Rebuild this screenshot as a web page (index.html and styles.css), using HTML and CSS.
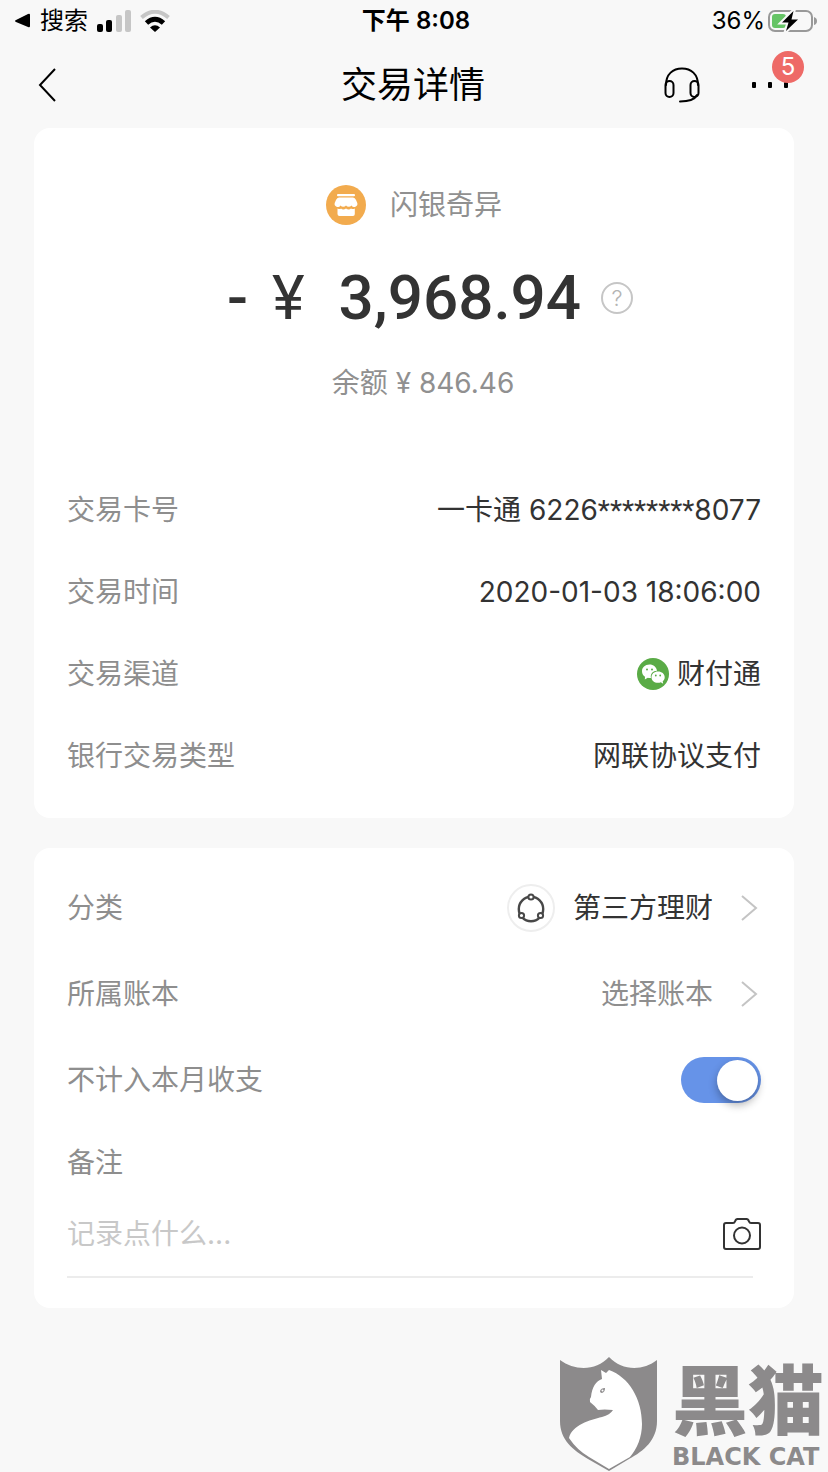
FILE: index.html
```
<!DOCTYPE html>
<html lang="zh-CN">
<head>
    <meta charset="UTF-8">
    <meta name="viewport" content="width=device-width, initial-scale=1.0">
    <title>交易详情</title>
    <link rel="stylesheet" href="styles.css">
</head>
<body>
    <div class="status-bar">
        <div class="status-left">
            <svg width="16" height="16" viewBox="0 0 16 16"><path d="M1 7 L13 1 Q15 0 15 2 V13 Q15 15 13 14 L1 9 Q-1 8 1 7Z"/></svg>
            <span>搜索</span>
            <svg class="signal" width="34" height="22" viewBox="0 0 34 22">
                <rect x="0" y="14" width="6" height="8" rx="2"/>
                <rect x="9" y="10" width="6" height="12" rx="2"/>
                <rect x="19" y="5" width="6" height="17" rx="2" fill="#c6c6c6"/>
                <rect x="28" y="0" width="6" height="22" rx="2" fill="#c6c6c6"/>
            </svg>
            <svg width="30" height="22" viewBox="0 0 30 22" fill="none">
                <path d="M1.500 7.500 Q15 -4 28.500 7.500" stroke="#c6c6c6" stroke-width="4"/>
                <path d="M6.500 13 Q15 5.500 23.500 13" stroke="#000" stroke-width="5"/>
                <path d="M10 17.500 Q15 13 20 17.500 L15 22Z" fill="#000"/>
            </svg>
        </div>
        <div class="status-time">下午 8:08</div>
        <div class="status-right">
            <span>36%</span>
            <svg width="49" height="24" viewBox="0 0 49 24">
                <rect x="1" y="2" width="43" height="20" rx="6" fill="none" stroke="#999" stroke-width="2"/>
                <path d="M46 8 Q49 9 49 12 Q49 15 46 16Z" fill="#999"/>
                <rect x="4" y="5" width="14" height="14" rx="3" fill="#66c466"/>
                <path d="M25.500 2 L14 13.500 H20.500 L18 22 L30 10.500 H23.500Z" stroke="#f8f8f8" stroke-width="4"/>
                <path d="M25.500 2 L14 13.500 H20.500 L18 22 L30 10.500 H23.500Z"/>
            </svg>
        </div>
    </div>

    <header class="nav">
        <button class="icon-btn back" aria-label="返回">
            <svg width="18" height="34" viewBox="0 0 18 34" fill="none" stroke="#000" stroke-width="2"><path d="M17 1 L2 17 L17 33"/></svg>
        </button>
        <h1>交易详情</h1>
        <div class="nav-actions">
            <button class="icon-btn" aria-label="客服">
                <svg width="36" height="36" viewBox="0 0 36 36" fill="none" stroke="#000" stroke-width="2" stroke-linecap="round">
                    <path d="M2 18 C2 7 9 1.500 18 1.500 S34 7 34 18"/>
                    <rect x="1.500" y="14" width="8" height="16" rx="4"/>
                    <rect x="26.500" y="14" width="8" height="16" rx="4"/>
                    <path d="M33 28 C31 32 25 34.500 16 34.500"/>
                </svg>
            </button>
            <button class="icon-btn more" aria-label="更多">
                <svg width="36" height="6" viewBox="0 0 36 6"><rect width="4" height="6" rx="1"/><rect x="16" width="4" height="6" rx="1"/><rect x="32" width="4" height="6" rx="1"/></svg>
                <span class="badge">5</span>
            </button>
        </div>
    </header>

    <main>
        <section class="card summary">
            <div class="merchant">
                <svg width="40" height="40" viewBox="0 0 40 40">
                    <circle cx="20" cy="20" r="20" fill="#f2ab4e"/>
                    <g fill="#fff">
                        <rect x="11" y="9" width="18" height="2.200" rx="1"/>
                        <path d="M13 12.500 H27 Q29 12.500 30 15 L31.300 18 A3.200 3.200 0 0 1 25.500 20.500 A3.600 3.600 0 0 1 20 20.500 A3.600 3.600 0 0 1 14.500 20.500 A3.200 3.200 0 0 1 8.700 18 L10 15 Q11 12.500 13 12.500Z"/>
                        <path d="M11.500 23.500 Q14 24.500 15 23.500 Q17 25.500 20 23.500 Q23 25.500 25 23.500 Q27 24.500 28.800 23.500 V29 Q28.800 31 27 31 H13.500 Q11.500 31 11.500 29Z"/>
                    </g>
                </svg>
                <span>闪银奇异</span>
            </div>
            <div class="amount">
                <span>-</span>
                <span class="yen">¥</span>
                <span>3,968.94</span>
                <button class="help" aria-label="帮助">?</button>
            </div>
            <p class="balance">余额 ¥ 846.46</p>
            <dl>
                <div class="row"><dt>交易卡号</dt><dd><span>一卡通 6226<span class="mask">********</span>8077</span></dd></div>
                <div class="row"><dt>交易时间</dt><dd>2020-01-03 18:06:00</dd></div>
                <div class="row">
                    <dt>交易渠道</dt>
                    <dd>
                        <svg width="32" height="32" viewBox="0 0 32 32">
                            <circle cx="16" cy="16" r="16" fill="#5aab46"/>
                            <path d="M12.500 6.500 C8 6.500 5 9.500 5 13.200 C5 15.500 6.200 17.400 8 18.700 L7.800 21.500 L10.800 19.800 Q12.500 20.200 14 20 C13 16 16 12.800 20 12.800 C19.500 9 16.500 6.500 12.500 6.500Z" fill="#fff"/>
                            <path d="M21 13.600 C17.200 13.600 14.500 16 14.500 19.200 S17.200 24.800 21 24.800 Q22.500 24.800 23.800 24.300 L26.200 25.700 L25.700 23.200 C27 22.200 27.700 20.900 27.700 19.200 C27.700 16 24.800 13.600 21 13.600Z" fill="#fff"/>
                            <g fill="#5aab46"><circle cx="10" cy="11.500" r="1"/><circle cx="15" cy="11.500" r="1"/><circle cx="18.800" cy="17.500" r=".9"/><circle cx="23.200" cy="17.500" r=".9"/></g>
                        </svg>
                        财付通
                    </dd>
                </div>
                <div class="row"><dt>银行交易类型</dt><dd>网联协议支付</dd></div>
            </dl>
        </section>

        <section class="card settings">
            <button class="row">
                <span class="label">分类</span>
                <span class="choice">
                    <span class="category">
                        <svg width="28" height="30" viewBox="0 0 28 30" fill="none" stroke="#484848" stroke-width="2">
                            <circle cx="14" cy="16" r="12.200" stroke-width="2.400"/>
                            <g fill="#fff"><circle cx="14" cy="4" r="2.600"/><circle cx="4.500" cy="22.500" r="2.600"/><circle cx="23.500" cy="22.500" r="2.600"/></g>
                        </svg>
                    </span>
                    第三方理财
                    <svg class="chevron" width="17" height="26" viewBox="0 0 17 26"><path d="M1 1 L15 13 L1 25"/></svg>
                </span>
            </button>
            <button class="row">
                <span class="label">所属账本</span>
                <span class="choice muted">
                    选择账本
                    <svg class="chevron" width="17" height="26" viewBox="0 0 17 26"><path d="M1 1 L15 13 L1 25"/></svg>
                </span>
            </button>
            <div class="row">
                <label for="exclude">不计入本月收支</label>
                <input type="checkbox" class="switch" id="exclude" checked>
            </div>
            <div class="row note-label">
                <label for="note">备注</label>
            </div>
            <div class="note">
                <input type="text" id="note" placeholder="记录点什么...">
                <button class="icon-btn" aria-label="拍照">
                    <svg width="38" height="32" viewBox="0 0 38 32" fill="none" stroke="#333" stroke-width="2">
                        <path d="M3 5 H10 Q11.500 5 12 3.500 Q12.800 1 14.500 1 H23.500 Q25.200 1 26 3.500 Q26.500 5 28 5 H35 Q37 5 37 7 V29 Q37 31 35 31 H3 Q1 31 1 29 V7 Q1 5 3 5Z"/>
                        <circle cx="19" cy="17.500" r="8"/>
                    </svg>
                </button>
            </div>
        </section>
    </main>

    <footer class="brand">
        <svg width="98" height="115" viewBox="0 0 98 115">
            <path d="M0 3 C15 14 36 14 49 0 C62 14 83 14 97 3 V64 C97 83 84 94 69 102 L49 114 L28 102 C13 93 0 83 0 64Z" fill="#8c8a8b"/>
            <path d="M41 13 L46 16 L49 13 C69 20 82 42 82 67 C82 80 77 92 70 100 L49 112 L29 100 Q17 93 9 81 C12 68 30 63 42 60 Q50 58 53 53 Q44 52 38 53 Q34 48 30 45 Q29 42 31 40 C32 30 36 24 42 22Z" fill="#fff"/>
            <path d="M40 34 Q41 31 45 31 Q45 35 42 36 Q40 36 40 34Z" fill="#8c8a8b"/>
            <circle cx="42.500" cy="33.500" r="1" fill="#fff"/>
        </svg>
        <div class="brand-text">
            <div class="brand-cn">黑猫</div>
            <div class="brand-en">BLACK CAT</div>
        </div>
    </footer>
</body>
</html>
```
FILE: styles.css
```
* {
    margin: 0;
    padding: 0;
    box-sizing: border-box;
}
body {
    display: flex;
    flex-direction: column;
    min-height: 100vh;
    background-color: #f8f8f8;
    font-family: Inter, "Noto Sans CJK SC", sans-serif;
    font-size: 28px;
    line-height: 40px;
    color: #333;
}
svg {
    display: block;
    flex-shrink: 0;
}
button, input {
    font: inherit;
    color: inherit;
    background: none;
    border: none;
}
.status-bar {
    display: grid;
    grid-template-columns: 1fr auto 1fr;
    align-items: center;
    height: 42px;
    padding: 0 11px 0 15px;
    font-size: 24px;
    color: #000;
}
.status-left, .status-right {
    display: flex;
    align-items: center;
    gap: 9px;
}
.status-right {
    justify-content: flex-end;
    gap: 3px;
}
.status-time {
    font-weight: 600;
}
.nav {
    display: grid;
    grid-template-columns: 1fr auto 1fr;
    align-items: center;
    height: 86px;
    padding: 0 40px 0 38px;
    color: #000;
}
h1 {
    font-size: 36px;
    font-weight: 400;
}
.nav-actions {
    display: flex;
    align-items: center;
    justify-content: flex-end;
    gap: 52px;
}
.back {
    justify-self: start;
}
.more {
    position: relative;
}
.badge {
    position: absolute;
    right: -16px;
    bottom: 5px;
    width: 32px;
    height: 32px;
    border-radius: 50%;
    background-color: #ee6a67;
    color: #fff;
    font-size: 24px;
    line-height: 32px;
    text-align: center;
}
main {
    padding: 0 34px;
}
.card {
    padding: 0 33px;
    border-radius: 16px;
    background-color: #fff;
}
.summary {
    padding-top: 49px;
    padding-bottom: 21px;
    margin-bottom: 30px;
}
.merchant {
    display: flex;
    align-items: center;
    justify-content: center;
    gap: 24px;
    height: 56px;
    color: #909090;
}
.amount {
    display: flex;
    align-items: center;
    justify-content: center;
    gap: 20px;
    height: 130px;
    padding-left: 32px;
    font-family: Roboto, sans-serif;
    font-size: 62px;
    font-weight: 500;
}
.yen {
    margin: 0 14px 0 4px;
    font-weight: 400;
}
.help {
    width: 32px;
    height: 32px;
    border: 2px solid #c6c6c6;
    border-radius: 50%;
    color: #b4b4b4;
    font-family: Inter, sans-serif;
    font-size: 22px;
    font-weight: 300;
    line-height: 28px;
}
.balance {
    padding-left: 18px;
    margin: 0 0 66px;
    color: #909090;
    text-align: center;
}
.row {
    display: flex;
    align-items: center;
    justify-content: space-between;
    width: 100%;
    height: 82px;
}
dt, label, .label {
    color: #8e8e8e;
}
dd {
    display: flex;
    align-items: center;
    gap: 8px;
}
.mask {
    font-family: Roboto, sans-serif;
}
.settings {
    padding-top: 17px;
    padding-bottom: 30px;
}
.settings .row {
    height: 86px;
}
.settings .note-label {
    height: 80px;
}
.choice {
    display: flex;
    align-items: center;
    gap: 18px;
    padding-right: 3px;
}
.muted {
    color: #8e8e8e;
}
.category {
    display: flex;
    align-items: center;
    justify-content: center;
    width: 48px;
    height: 48px;
    border: 2px solid #eee;
    border-radius: 50%;
}
.chevron {
    margin-left: 10px;
    fill: none;
    stroke: #c4c4c4;
    stroke-width: 2;
}
.switch {
    appearance: none;
    display: flex;
    align-items: center;
    width: 80px;
    height: 46px;
    padding: 3px;
    border-radius: 23px;
    background-color: #ccc;
}
.switch::before {
    content: "";
    width: 41px;
    height: 41px;
    border-radius: 50%;
    background-color: #fff;
    box-shadow: 0 4px 8px rgba(0, 0, 0, 0.3);
}
.switch:checked {
    justify-content: flex-end;
    background-color: #6693e8;
}
.note {
    display: flex;
    align-items: center;
    justify-content: space-between;
    height: 75px;
    padding-bottom: 14px;
    background: linear-gradient(#ececec, #ececec) left bottom / calc(100% - 8px) 2px no-repeat;
}
.note input {
    flex: 1;
    min-width: 0;
}
.note input::placeholder {
    color: #c8c8c8;
}
.icon-btn {
    display: block;
}
.brand {
    display: flex;
    gap: 14px;
    justify-content: flex-end;
    margin-top: auto;
    padding-right: 4px;
    color: #8c8a8b;
}
.brand-text {
    padding-top: 4px;
}
.brand-cn {
    font-size: 76px;
    font-weight: 900;
    line-height: 80px;
}
.brand-en {
    padding-top: 3px;
    font-family: "DejaVu Sans", sans-serif;
    font-size: 24px;
    font-weight: 700;
    line-height: 26px;
}
```
